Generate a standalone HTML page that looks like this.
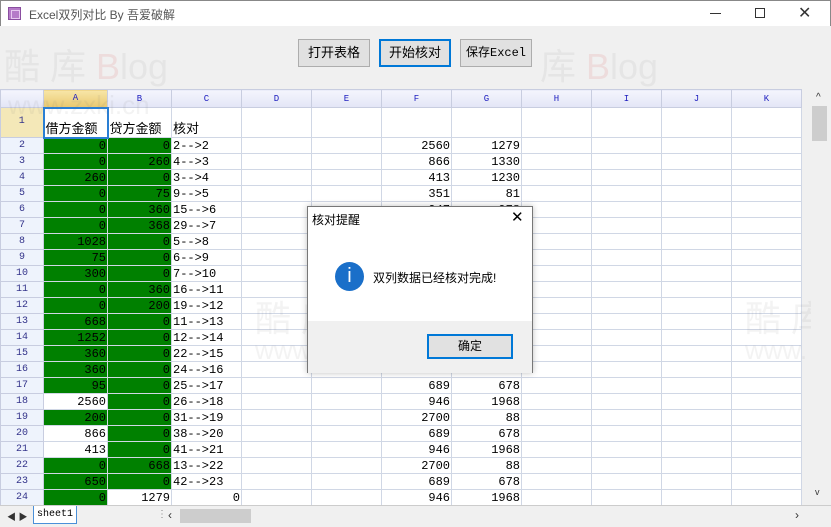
<!DOCTYPE html>
<html><head><meta charset="utf-8"><style>
*{margin:0;padding:0;box-sizing:border-box}
body{width:831px;height:527px;overflow:hidden;background:#f0f0f0;font-family:"Liberation Sans","Noto Sans CJK SC",sans-serif;position:relative}
.title{position:absolute;left:0;top:0;width:831px;height:26px;background:#fff;border:1px solid #888;border-bottom:none}
.title .t{position:absolute;left:28px;top:5px;font-size:12px;color:#555}
.ico{position:absolute;left:7px;top:6px;width:13px;height:13px;background:#b57ac8;border:1px solid #8a4ea0}
.ico:after{content:"";position:absolute;left:2px;top:2px;width:7px;height:7px;border:1px solid #e6c8ef}
.btn{position:absolute;top:39px;height:28px;background:#e1e1e1;border:1px solid #adadad;font-size:13px;text-align:center;line-height:25px;color:#000}
.wm{position:absolute;color:rgba(120,120,120,.09);font-size:36px;font-family:"Liberation Sans","Noto Sans CJK SC",sans-serif;white-space:nowrap}
table{position:absolute;left:0;top:89px;border-collapse:collapse;table-layout:fixed;background:#fff}
td{border:1px solid #d0d7e5;height:16px;font-family:"Liberation Mono","Noto Sans CJK SC",monospace;font-size:12px;padding:0 1px;white-space:nowrap;overflow:hidden;text-align:right;line-height:14px}
tr.h td{height:18px;background:linear-gradient(#f4f5fd,#e3e5f6);text-align:center;font-size:9px;color:#2020c0;border-color:#c8cde0}
td.rh{background:#eef3fc;text-align:center;color:#33338a;font-size:10px;border-color:#c8cde0}
.g{background:#008000}
.l{text-align:left}
tr.r1 td{height:30px;vertical-align:bottom;padding-bottom:2px}
.vs{position:absolute;left:811px;top:89px;width:18px;height:416px;background:#f0f0f0}
.tabs{position:absolute;left:0;top:505px;width:831px;height:22px;background:#f0f0f0;border-top:1px solid #ccc}
.dlg{position:absolute;left:307px;top:206px;width:226px;height:167px;background:#fff;border:1px solid #777;box-shadow:0 0 6px rgba(0,0,0,.25)}
</style></head><body>
<div class="title"><div class="ico"></div><div class="t">Excel双列对比 By 吾爱破解</div>
<div style="position:absolute;left:709px;top:12px;width:11px;height:1px;background:#333"></div>
<div style="position:absolute;left:754px;top:7px;width:10px;height:10px;border:1px solid #333"></div>
<div style="position:absolute;left:797px;top:2px;font-size:16px;color:#333">✕</div></div>
<div class="wm" style="left:4px;top:38px">酷 库 <span style="color:rgba(220,80,80,.12)">B</span>log</div>
<div class="wm" style="left:540px;top:38px">库 <span style="color:rgba(220,80,80,.12)">B</span>log</div>
<div class="btn" style="left:298px;width:72px">打开表格</div>
<div class="btn" style="left:379px;width:72px;border:2px solid #0078d7;line-height:24px">开始核对</div>
<div class="btn" style="left:460px;width:72px;font-size:12px">保存<span style="font-family:'Liberation Mono'">Excel</span></div>
<table>
<colgroup><col style="width:43px"><col style="width:64px"><col style="width:64px"><col style="width:70px"><col style="width:70px"><col style="width:70px"><col style="width:70px"><col style="width:70px"><col style="width:70px"><col style="width:70px"><col style="width:70px"><col style="width:70px"></colgroup>
<tr class="h"><td></td><td style="background:linear-gradient(#f8e6a8,#e8c870);color:#2020c0">A</td><td>B</td><td>C</td><td>D</td><td>E</td><td>F</td><td>G</td><td>H</td><td>I</td><td>J</td><td>K</td></tr>
<tr class="r1"><td class="rh" style="background:#f4e8b8;vertical-align:middle">1</td><td class="l" style="border:2px solid #2a7fd4;font-family:'Noto Sans CJK SC',sans-serif;font-size:13px">借方金额</td><td class="l" style="font-family:'Noto Sans CJK SC',sans-serif;font-size:13px">贷方金额</td><td class="l" style="font-family:'Noto Sans CJK SC',sans-serif;font-size:13px">核对</td><td></td><td></td><td></td><td></td><td></td><td></td><td></td><td></td></tr>
<tr><td class="rh">2</td><td class="g">0</td><td class="g">0</td><td class="l">2-->2</td><td></td><td></td><td>2560</td><td>1279</td><td></td><td></td><td></td><td></td></tr>
<tr><td class="rh">3</td><td class="g">0</td><td class="g">260</td><td class="l">4-->3</td><td></td><td></td><td>866</td><td>1330</td><td></td><td></td><td></td><td></td></tr>
<tr><td class="rh">4</td><td class="g">260</td><td class="g">0</td><td class="l">3-->4</td><td></td><td></td><td>413</td><td>1230</td><td></td><td></td><td></td><td></td></tr>
<tr><td class="rh">5</td><td class="g">0</td><td class="g">75</td><td class="l">9-->5</td><td></td><td></td><td>351</td><td>81</td><td></td><td></td><td></td><td></td></tr>
<tr><td class="rh">6</td><td class="g">0</td><td class="g">360</td><td class="l">15-->6</td><td></td><td></td><td>947</td><td>978</td><td></td><td></td><td></td><td></td></tr>
<tr><td class="rh">7</td><td class="g">0</td><td class="g">368</td><td class="l">29-->7</td><td></td><td></td><td></td><td></td><td></td><td></td><td></td><td></td></tr>
<tr><td class="rh">8</td><td class="g">1028</td><td class="g">0</td><td class="l">5-->8</td><td></td><td></td><td></td><td></td><td></td><td></td><td></td><td></td></tr>
<tr><td class="rh">9</td><td class="g">75</td><td class="g">0</td><td class="l">6-->9</td><td></td><td></td><td></td><td></td><td></td><td></td><td></td><td></td></tr>
<tr><td class="rh">10</td><td class="g">300</td><td class="g">0</td><td class="l">7-->10</td><td></td><td></td><td></td><td></td><td></td><td></td><td></td><td></td></tr>
<tr><td class="rh">11</td><td class="g">0</td><td class="g">360</td><td class="l">16-->11</td><td></td><td></td><td></td><td></td><td></td><td></td><td></td><td></td></tr>
<tr><td class="rh">12</td><td class="g">0</td><td class="g">200</td><td class="l">19-->12</td><td></td><td></td><td></td><td></td><td></td><td></td><td></td><td></td></tr>
<tr><td class="rh">13</td><td class="g">668</td><td class="g">0</td><td class="l">11-->13</td><td></td><td></td><td></td><td></td><td></td><td></td><td></td><td></td></tr>
<tr><td class="rh">14</td><td class="g">1252</td><td class="g">0</td><td class="l">12-->14</td><td></td><td></td><td></td><td></td><td></td><td></td><td></td><td></td></tr>
<tr><td class="rh">15</td><td class="g">360</td><td class="g">0</td><td class="l">22-->15</td><td></td><td></td><td></td><td></td><td></td><td></td><td></td><td></td></tr>
<tr><td class="rh">16</td><td class="g">360</td><td class="g">0</td><td class="l">24-->16</td><td></td><td></td><td>2700</td><td>88</td><td></td><td></td><td></td><td></td></tr>
<tr><td class="rh">17</td><td class="g">95</td><td class="g">0</td><td class="l">25-->17</td><td></td><td></td><td>689</td><td>678</td><td></td><td></td><td></td><td></td></tr>
<tr><td class="rh">18</td><td>2560</td><td class="g">0</td><td class="l">26-->18</td><td></td><td></td><td>946</td><td>1968</td><td></td><td></td><td></td><td></td></tr>
<tr><td class="rh">19</td><td class="g">200</td><td class="g">0</td><td class="l">31-->19</td><td></td><td></td><td>2700</td><td>88</td><td></td><td></td><td></td><td></td></tr>
<tr><td class="rh">20</td><td>866</td><td class="g">0</td><td class="l">38-->20</td><td></td><td></td><td>689</td><td>678</td><td></td><td></td><td></td><td></td></tr>
<tr><td class="rh">21</td><td>413</td><td class="g">0</td><td class="l">41-->21</td><td></td><td></td><td>946</td><td>1968</td><td></td><td></td><td></td><td></td></tr>
<tr><td class="rh">22</td><td class="g">0</td><td class="g">668</td><td class="l">13-->22</td><td></td><td></td><td>2700</td><td>88</td><td></td><td></td><td></td><td></td></tr>
<tr><td class="rh">23</td><td class="g">650</td><td class="g">0</td><td class="l">42-->23</td><td></td><td></td><td>689</td><td>678</td><td></td><td></td><td></td><td></td></tr>
<tr><td class="rh">24</td><td class="g">0</td><td>1279</td><td>0</td><td></td><td></td><td>946</td><td>1968</td><td></td><td></td><td></td><td></td></tr>
</table>
<div class="wm" style="left:255px;top:290px">酷 库 <span style="color:rgba(220,80,80,.12)">B</span>log</div>
<div class="wm" style="left:255px;top:335px;font-size:26px">www.zxki.cn</div>
<div class="wm" style="left:745px;top:290px">酷 库</div>
<div class="wm" style="left:745px;top:335px;font-size:26px">www.</div>
<div class="wm" style="left:8px;top:90px;font-size:26px">www.zxki.cn</div>
<div class="vs"><div style="position:absolute;left:5px;top:3px;font-size:10px;color:#333">^</div><div style="position:absolute;left:1px;top:17px;width:15px;height:35px;background:#cdcdcd"></div><div style="position:absolute;left:4px;top:398px;font-size:9px;color:#333">v</div></div>
<div class="tabs">
<div style="position:absolute;left:7px;top:4px;font-size:9px;color:#333">◀ ▶</div>
<div style="position:absolute;left:33px;top:0;width:44px;height:18px;background:#fff;border:1px solid #4a90d9;border-top:none;font-family:'Liberation Mono';font-size:10px;text-align:center;line-height:17px">sheet1</div>
<div style="position:absolute;left:157px;top:3px;font-size:10px;color:#888">⋮</div>
<div style="position:absolute;left:168px;top:2px;font-size:12px;color:#333">‹</div>
<div style="position:absolute;left:180px;top:3px;width:71px;height:14px;background:#cdcdcd"></div>
<div style="position:absolute;left:795px;top:2px;font-size:12px;color:#333">›</div>
</div>
<div class="dlg">
<div style="position:absolute;left:4px;top:4px;font-size:12px">核对提醒</div>
<div style="position:absolute;left:203px;top:1px;font-size:15px">✕</div>
<div style="position:absolute;left:27px;top:55px;width:29px;height:29px;border-radius:50%;background:#1a6fc9;color:#fff;text-align:center;font-size:20px;line-height:29px;font-family:'Liberation Sans'">i</div>
<div style="position:absolute;left:65px;top:62px;font-size:12px">双列数据已经核对完成!</div>
<div style="position:absolute;left:0;top:114px;width:224px;height:52px;background:#f0f0f0"></div>
<div style="position:absolute;left:119px;top:127px;width:86px;height:25px;background:#e1e1e1;border:2px solid #0078d7;font-size:12px;text-align:center;line-height:21px">确定</div>
</div>
</body></html>
